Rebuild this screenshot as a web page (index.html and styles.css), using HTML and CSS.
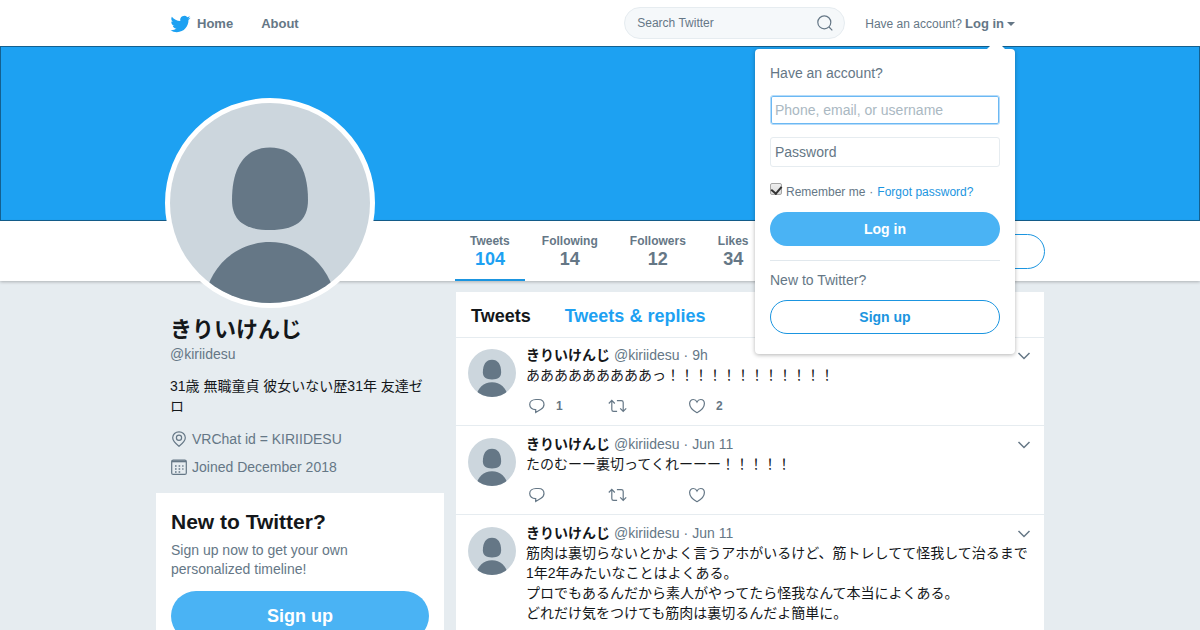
FILE: index.html
```html
<!DOCTYPE html>
<html lang="en">
<head>
    <meta charset="UTF-8">
    <meta name="viewport" content="width=device-width, initial-scale=1.0">
    <title>きりいけんじ (@kiriidesu) | Twitter</title>
    <link rel="stylesheet" href="styles.css">
</head>
<body>
    <!-- shared icons -->
    <svg class="sprite" aria-hidden="true">
        <symbol id="avatar" viewBox="0 0 200 200">
            <rect width="200" height="200" fill="#ccd6dd"/>
            <path d="M100 44.5C125 44.5 138 64 138 97C138 118 125 127 100 127C75 127 62 118 62 97C62 64 75 44.5 100 44.5Z" fill="#657786"/>
            <path d="M34 200C38 164 66 139 100 139C134 139 162 164 166 200Z" fill="#657786"/>
        </symbol>
        <symbol id="chevron" viewBox="0 0 14 8">
            <path d="M1.5 1L7 6.5L12.5 1"/>
        </symbol>
        <symbol id="reply" viewBox="0 0 18 16">
            <path d="M8 1.5H10.5C14 1.5 16 3.8 16 6.6C16 8.8 14.8 10.2 13 11.3L7.7 14.5V11.6C4.2 11.7 1.7 9.6 1.7 6.6C1.7 3.8 4.2 1.5 8 1.5Z"/>
        </symbol>
        <symbol id="retweet" viewBox="0 0 20 16">
            <path d="M0.8 5.5L3.8 2.4L6.8 5.5M3.8 2.6V11.4C3.8 12.6 4.5 13.3 5.6 13.3H9.1M8.9 2.6H13.3C14.5 2.6 15.2 3.3 15.2 4.4V13.2M12.2 10.4L15.2 13.5L18.2 10.4"/>
        </symbol>
        <symbol id="heart" viewBox="0 0 18 16">
            <path d="M9 14.7C6 13.2 1.6 9.6 1.6 5.6C1.6 3.2 3.3 1.5 5.3 1.5C7 1.5 8.3 2.5 9 4C9.7 2.5 11 1.5 12.7 1.5C14.7 1.5 16.4 3.2 16.4 5.6C16.4 9.6 12 13.2 9 14.7Z"/>
        </symbol>
    </svg>

    <header class="topbar">
        <div class="container topbar-inner">
            <nav class="topbar-nav">
                <a href="#" class="home">
                    <svg class="bird" viewBox="0 0 24 24"><path d="M23.953 4.57a10 10 0 01-2.825.775 4.958 4.958 0 002.163-2.723c-.951.555-2.005.959-3.127 1.184a4.92 4.92 0 00-8.384 4.482C7.69 8.095 4.067 6.13 1.64 3.162a4.822 4.822 0 00-.666 2.475c0 1.71.87 3.213 2.188 4.096a4.904 4.904 0 01-2.228-.616v.06a4.923 4.923 0 003.946 4.827 4.996 4.996 0 01-2.212.085 4.936 4.936 0 004.604 3.417 9.867 9.867 0 01-6.102 2.105c-.39 0-.779-.023-1.17-.067a13.995 13.995 0 007.557 2.209c9.053 0 13.998-7.496 13.998-13.985 0-.21 0-.42-.015-.63A9.935 9.935 0 0024 4.59z"/></svg>
                    Home
                </a>
                <a href="#">About</a>
            </nav>
            <form class="search">
                <input type="text" placeholder="Search Twitter" aria-label="Search Twitter">
                <button type="button" aria-label="Search">
                    <svg viewBox="0 0 16 16"><circle cx="7.3" cy="7.3" r="6.5"/><path d="M12 12L15.3 15.3"/></svg>
                </button>
            </form>
            <div class="session">
                <a href="#" class="session-link">Have an account? <b>Log in</b><span class="caret"></span></a>
                <form class="login-menu">
                    <p>Have an account?</p>
                    <input class="field focused" type="text" placeholder="Phone, email, or username" aria-label="Phone, email, or username">
                    <input class="field" type="password" placeholder="Password" aria-label="Password">
                    <div class="remember">
                        <input type="checkbox" id="remember" checked>
                        <label for="remember">Remember me</label>
                        <span>·</span>
                        <a href="#">Forgot password?</a>
                    </div>
                    <button type="button" class="btn btn-primary">Log in</button>
                    <hr>
                    <p>New to Twitter?</p>
                    <button type="button" class="btn btn-outline">Sign up</button>
                </form>
            </div>
        </div>
    </header>

    <div class="banner"></div>

    <div class="profile-bar">
        <div class="container profile-bar-inner">
            <svg class="profile-avatar" role="img" aria-label="きりいけんじ"><use href="#avatar"/></svg>
            <nav class="stats">
                <a href="#" class="active"><span>Tweets</span><b>104</b></a>
                <a href="#"><span>Following</span><b>14</b></a>
                <a href="#"><span>Followers</span><b>12</b></a>
                <a href="#"><span>Likes</span><b>34</b></a>
            </nav>
            <button type="button" class="btn btn-outline follow">Follow</button>
        </div>
    </div>

    <main class="container content">
        <aside class="sidebar">
            <div class="profile">
                <h1>きりいけんじ</h1>
                <a href="#" class="handle">@kiriidesu</a>
                <p class="bio">31歳 無職童貞 彼女いない歴31年 友達ゼロ</p>
                <div class="meta">
                    <svg viewBox="0 0 18 18"><path d="M9 16.2C6 13.8 2.7 11.3 2.7 7.7C2.7 4.2 5.5 1.8 9 1.8C12.5 1.8 15.3 4.2 15.3 7.7C15.3 11.3 12 13.8 9 16.2Z"/><circle cx="9" cy="7.8" r="2.6"/></svg>
                    VRChat id = KIRIIDESU
                </div>
                <div class="meta">
                    <svg viewBox="0 0 18 18"><rect x="1.7" y="2" width="14.6" height="14.4" rx="1.5"/><path d="M2 3.3H16" stroke-width="2"/><path d="M5 8H13.5M5 11H13.5M5 14H10.5" stroke-width="1.6" stroke-dasharray="1.6 2"/></svg>
                    Joined December 2018
                </div>
            </div>
            <section class="signup-card">
                <h2>New to Twitter?</h2>
                <p>Sign up now to get your own personalized timeline!</p>
                <button type="button" class="btn btn-primary btn-large">Sign up</button>
            </section>
        </aside>

        <section class="timeline">
            <div class="timeline-tabs">
                <h2>Tweets</h2>
                <a href="#">Tweets &amp; replies</a>
            </div>

            <article class="tweet">
                <svg class="tweet-avatar"><use href="#avatar"/></svg>
                <div class="tweet-body">
                    <div class="tweet-head">
                        <b>きりいけんじ</b>
                        <span>@kiriidesu</span>
                        <span>·</span>
                        <a href="#">9h</a>
                        <button type="button" class="more" aria-label="More"><svg><use href="#chevron"/></svg></button>
                    </div>
                    <p lang="ja">あああああああああっ！！！！！！！！！！！！</p>
                    <div class="actions">
                        <button type="button" aria-label="Reply"><svg><use href="#reply"/></svg>1</button>
                        <button type="button" aria-label="Retweet"><svg class="wide"><use href="#retweet"/></svg></button>
                        <button type="button" aria-label="Like"><svg><use href="#heart"/></svg>2</button>
                    </div>
                </div>
            </article>

            <article class="tweet">
                <svg class="tweet-avatar"><use href="#avatar"/></svg>
                <div class="tweet-body">
                    <div class="tweet-head">
                        <b>きりいけんじ</b>
                        <span>@kiriidesu</span>
                        <span>·</span>
                        <a href="#">Jun 11</a>
                        <button type="button" class="more" aria-label="More"><svg><use href="#chevron"/></svg></button>
                    </div>
                    <p lang="ja">たのむーー裏切ってくれーーー！！！！！</p>
                    <div class="actions">
                        <button type="button" aria-label="Reply"><svg><use href="#reply"/></svg></button>
                        <button type="button" aria-label="Retweet"><svg class="wide"><use href="#retweet"/></svg></button>
                        <button type="button" aria-label="Like"><svg><use href="#heart"/></svg></button>
                    </div>
                </div>
            </article>

            <article class="tweet">
                <svg class="tweet-avatar"><use href="#avatar"/></svg>
                <div class="tweet-body">
                    <div class="tweet-head">
                        <b>きりいけんじ</b>
                        <span>@kiriidesu</span>
                        <span>·</span>
                        <a href="#">Jun 11</a>
                        <button type="button" class="more" aria-label="More"><svg><use href="#chevron"/></svg></button>
                    </div>
                    <p lang="ja">筋肉は裏切らないとかよく言うアホがいるけど、筋トレしてて怪我して治るまで1年2年みたいなことはよくある。<br>プロでもあるんだから素人がやってたら怪我なんて本当によくある。<br>どれだけ気をつけても筋肉は裏切るんだよ簡単に。</p>
                </div>
            </article>
        </section>
    </main>
</body>
</html>
```
FILE: styles.css
```css
* {
    margin: 0;
    padding: 0;
    box-sizing: border-box;
}

body {
    height: 100vh;
    overflow: hidden;
    background: #e6ecf0;
    color: #14171a;
    font-family: "Liberation Sans", Arial, "Noto Sans CJK JP", sans-serif;
    font-size: 14px;
    line-height: 20px;
}

a {
    color: #1b95e0;
    text-decoration: none;
}

button,
input {
    font-family: inherit;
}

button {
    background: none;
    border: none;
    cursor: pointer;
}

svg {
    flex: none;
    fill: none;
    stroke: #657786;
    stroke-width: 1.2;
}

.sprite {
    display: none;
}

.container {
    width: 100%;
    max-width: 890px;
    margin: 0 auto;
}

/* top bar */
.topbar {
    background: #fff;
}

.topbar-inner {
    display: flex;
    align-items: center;
    height: 46px;
    padding: 0 30px 0 15px;
}

.topbar-nav {
    display: flex;
    gap: 28px;
    margin-right: auto;
    padding-top: 2px;
}

.topbar-nav a {
    display: flex;
    align-items: center;
    gap: 6px;
    color: #657786;
    font-size: 13px;
    font-weight: bold;
}

.bird {
    width: 21px;
    height: 20px;
    fill: #1da1f2;
    stroke: none;
}

.search {
    display: flex;
    align-items: center;
    width: 221px;
    height: 32px;
    padding: 0 11px 0 12px;
    background: #f5f8fa;
    border: 1px solid #e6ecf0;
    border-radius: 16px;
}

.search input {
    flex: 1;
    min-width: 0;
    background: none;
    border: none;
    outline: none;
    font-size: 12px;
}

.search input::placeholder {
    color: #657786;
}

.search button,
.search svg {
    display: block;
    width: 16px;
    height: 16px;
}

.session {
    position: relative;
    margin-left: 20px;
    padding-top: 2px;
}

.session-link {
    display: flex;
    align-items: center;
    gap: 3px;
    color: #657786;
    font-size: 12px;
}

.session-link b {
    font-size: 13px;
}

.caret {
    border: 4px solid transparent;
    border-top-color: #657786;
    border-bottom: 0;
}

/* login dropdown */
.login-menu {
    position: absolute;
    top: 37px;
    right: 0;
    z-index: 10;
    width: 260px;
    padding: 14px 15px 20px;
    background: #fff;
    border-radius: 4px;
    box-shadow: 0 1px 4px rgba(0, 0, 0, 0.3);
    color: #657786;
}

.login-menu::before {
    content: "";
    position: absolute;
    top: -9px;
    right: 9px;
    border: 10px solid transparent;
    border-top: 0;
    border-bottom-color: #fff;
}

.field {
    display: block;
    width: 100%;
    height: 30px;
    margin-top: 12px;
    padding: 0 4px;
    border: 1px solid #e6ecf0;
    border-radius: 3px;
    font-size: 14px;
}

.field::placeholder {
    color: #657786;
}

.field.focused {
    border-color: #b5dcfa;
    box-shadow: inset 0 0 0 1px #6cb8f3;
}

.field.focused::placeholder {
    color: #aab8c2;
}

.remember {
    display: flex;
    gap: 4px;
    margin: 15px 0 10px;
    font-size: 12px;
}

.remember input {
    appearance: none;
    width: 12px;
    height: 12px;
    margin-top: 1px;
    border: 1px solid #a6a6a6;
    border-radius: 2px;
    background: linear-gradient(#eee, #dcdcdc);
}

.remember input:checked::before {
    content: "";
    display: block;
    width: 5px;
    height: 8px;
    margin: 0 auto;
    border: solid #333;
    border-width: 0 2px 2px 0;
    transform: rotate(40deg);
}

.btn {
    height: 34px;
    border-radius: 50px;
    font-size: 14px;
    font-weight: bold;
}

.btn-primary {
    width: 100%;
    background: #4ab3f4;
    color: #fff;
}

.btn-outline {
    width: 100%;
    background: #fff;
    border: 1px solid #1b95e0;
    color: #1b95e0;
}

.btn-large {
    height: 50px;
    font-size: 18px;
}

.login-menu hr {
    margin: 14px 0 9px;
    border: none;
    border-top: 1px solid #e1e8ed;
}

.login-menu .btn {
    display: block;
}

.login-menu .btn-outline {
    margin-top: 10px;
}

/* profile header */
.banner {
    height: 175px;
    background: #1da1f2;
    border: 1px solid #14608f;
}

.profile-bar {
    background: #fff;
    box-shadow: 0 1px 3px rgba(0, 0, 0, 0.25);
}

.profile-bar-inner {
    position: relative;
    display: flex;
    align-items: center;
    height: 60px;
    padding-left: 300px;
}

.profile-avatar {
    position: absolute;
    left: 10px;
    bottom: -27px;
    width: 210px;
    height: 210px;
    border: 5px solid #fff;
    border-radius: 50%;
    background: #fff;
}

.profile-avatar,
.tweet-avatar {
    stroke: none;
}

.stats {
    display: flex;
    align-self: stretch;
    gap: 2px;
}

.stats a {
    display: flex;
    flex-direction: column;
    align-items: center;
    padding: 11px 15px 0;
    border-bottom: 2px solid transparent;
    color: #657786;
    font-size: 12px;
    font-weight: bold;
    line-height: 18px;
}

.stats b {
    font-size: 18px;
}

.stats .active {
    border-color: #1b95e0;
}

.stats .active b {
    color: #1da1f2;
}

.follow {
    width: auto;
    height: 35px;
    margin-left: auto;
    padding: 0 36px;
}

/* columns */
.content {
    display: flex;
    gap: 12px;
    padding: 11px 1px 0;
}

.sidebar {
    width: 288px;
    flex: none;
}

.profile {
    padding: 24px 14px 16px;
    color: #657786;
}

.profile h1 {
    color: #14171a;
    font-size: 22px;
    line-height: 28px;
}

.handle {
    display: block;
    color: #657786;
}

.bio {
    margin: 12px 0 5px;
    color: #14171a;
}

.meta {
    display: flex;
    align-items: center;
    gap: 4px;
    padding-top: 8px;
}

.meta svg {
    width: 18px;
    height: 18px;
}

.signup-card {
    padding: 16px 15px;
    background: #fff;
}

.signup-card h2 {
    font-size: 21px;
    line-height: 26px;
}

.signup-card p {
    margin: 6px 0 12px;
    padding-right: 60px;
    color: #657786;
    line-height: 19px;
}

/* timeline */
.timeline {
    flex: 1;
    background: #fff;
}

.timeline-tabs {
    display: flex;
    align-items: center;
    gap: 34px;
    height: 46px;
    margin-bottom: -1px;
    padding: 2px 15px 0;
    border-bottom: 1px solid #e6ecf0;
    font-size: 18px;
    font-weight: bold;
}

.timeline-tabs h2 {
    font-size: 18px;
}

.timeline-tabs a {
    color: #1da1f2;
}

.tweet {
    display: flex;
    gap: 10px;
    padding: 8px 12px 9px;
    border-bottom: 1px solid #e6ecf0;
}

.tweet-avatar {
    width: 48px;
    height: 48px;
    margin-top: 4px;
    border-radius: 50%;
}

.tweet-body {
    flex: 1;
    min-width: 0;
}

.tweet-head {
    display: flex;
    gap: 4px;
    color: #657786;
}

.tweet-head b {
    color: #14171a;
}

.tweet-head a {
    color: #657786;
}

.more {
    margin-left: auto;
    padding-top: 2px;
}

.more svg {
    display: block;
    width: 16px;
    height: 8px;
    stroke-width: 1.5;
}

.actions {
    display: grid;
    grid-template-columns: repeat(3, 80px);
    margin-top: 11px;
    padding-left: 2px;
}

.actions button {
    display: flex;
    align-items: center;
    gap: 10px;
    height: 20px;
    color: #657786;
    font-size: 12px;
    font-weight: bold;
}

.actions svg {
    width: 18px;
    height: 16px;
}

.actions .wide {
    width: 20px;
}
```
